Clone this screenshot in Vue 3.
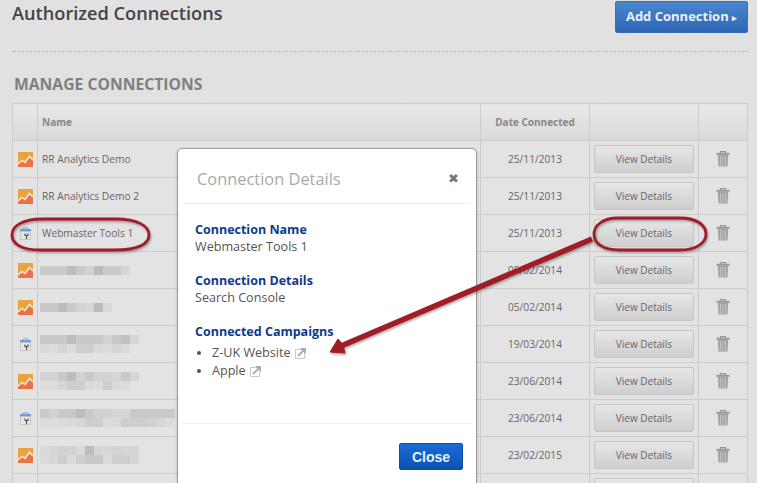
<script setup>
const shades = {
  a: '#c9c9c9', b: '#c5c5c6', c: '#cbc9c6', d: '#bdbdbe', e: '#d1d2d1', f: '#d6d6d7',
  g: '#bbbbba', h: '#d9dadb', i: '#dcdcdc', j: '#cdcfce', k: '#c1c1c0', l: '#d3d5d6'
}
const lines = (...s) => s.map(l => [...l].map(c => shades[c] || 'transparent'))

const data = [
  { type: 'ga', name: 'RR Analytics Demo', date: '25/11/2013', label: 'View Details' },
  { type: 'ga', name: 'RR Analytics Demo 2', date: '25/11/2013', label: 'View Details' },
  { type: 'wt', name: 'Webmaster Tools 1', date: '25/11/2013', label: 'View Details' },
  { type: 'ga', blur: lines('aacdcegaaf'), date: '05/02/2014', label: 'View Details' },
  { type: 'ga', blur: lines('aadaefgh'), date: '05/02/2014', label: 'View Details' },
  { type: 'wt', blur: lines('acadacaeakl', 'hifijjhifh'), date: '19/03/2014', label: 'View Details' },
  { type: 'ga', blur: lines('eeadeaeefaf', 'iifjjhijhi'), date: '23/06/2014', label: 'View Details' },
  { type: 'wt', blur: lines('aeacdaeeffaaaaa', 'iiihfjjihjjjefi'), date: '23/06/2014', label: 'View Details' },
  { type: 'ga', blur: lines('hfeehdffefl', 'ifjhjaaijjl'), date: '23/02/2015', label: 'View Details' },
  { type: 'none', blur: [], date: '', label: '' }
]
</script>

<template>
  <div class="page">
    <header class="top">
      <h1>Authorized Connections</h1>
      <button class="add">Add Connection <span class="caret">▸</span></button>
    </header>
    <h2>MANAGE CONNECTIONS</h2>
    <table>
      <colgroup>
        <col class="c1" /><col class="c2" /><col class="c3" /><col class="c4" /><col class="c5" />
      </colgroup>
      <thead>
        <tr>
          <th></th>
          <th class="left">Name</th>
          <th>Date Connected</th>
          <th></th>
          <th></th>
        </tr>
      </thead>
      <tbody>
        <tr v-for="(r, i) in data" :key="i">
          <td class="icon">
            <svg v-if="r.type === 'ga'" width="15" height="15" viewBox="0 0 15 15">
              <rect width="15" height="15" fill="#e9a440" />
              <path d="M0 12 L4 8.5 L7 10.5 L11.5 4.5 L15 8 V15 H0 Z" fill="#e8734b" />
              <path d="M0 12 L4 8.5 L7 10.5 L11.5 4.5 L15 8" fill="none" stroke="#f7e9da" stroke-width="1.5" />
            </svg>
            <svg v-else-if="r.type === 'wt'" width="13" height="13" viewBox="0 0 13 13">
              <path d="M4 2 V0.8 H9 V2" fill="none" stroke="#a3a8b0" stroke-width="1" />
              <rect x="1" y="2" width="11" height="2.4" fill="#6f9ce0" />
              <rect x="1.5" y="4.4" width="10" height="8.2" fill="#e6e6e7" stroke="#b4b4b4" stroke-width="0.6" />
              <path d="M6 6.5 V8.5 H9 V6.5 M7.5 8.5 V12" fill="none" stroke="#555" stroke-width="1.2" />
            </svg>
          </td>
          <td class="name">
            <template v-if="r.name">{{ r.name }}</template>
            <div v-else class="blur">
              <div v-for="(line, j) in r.blur" :key="j" class="blur-line">
                <span v-for="(c, k) in line" :key="k" :style="{ background: c }"></span>
              </div>
            </div>
          </td>
          <td class="date">{{ r.date }}</td>
          <td class="act"><button class="view">{{ r.label }}</button></td>
          <td class="icon">
            <svg v-if="r.type !== 'none'" width="14" height="16" viewBox="0 0 14 16">
              <path d="M4.5 2 V0.7 H9.5 V2" fill="none" stroke="#999" stroke-width="1.2" />
              <rect x="0.5" y="1.8" width="13" height="2" fill="#989898" />
              <path d="M1.8 4 H12.2 L11.5 15.5 H2.5 Z" fill="#a2a2a2" />
              <path d="M4.5 5 V15 M7 5 V15 M9.5 5 V15" stroke="#c4c4c4" stroke-width="1.1" />
            </svg>
          </td>
        </tr>
      </tbody>
    </table>

    <section class="modal">
      <div class="m-head">
        <span>Connection Details</span>
        <span class="x">✖</span>
      </div>
      <div class="m-body">
        <h3>Connection Name</h3>
        <p>Webmaster Tools 1</p>
        <h3>Connection Details</h3>
        <p>Search Console</p>
        <h3>Connected Campaigns</h3>
        <ul>
          <li>Z-UK Website
            <svg class="ext" width="11" height="11" viewBox="0 0 11 11"><path d="M5 1.5 H0.5 V10.5 H9.5 V6" fill="none" stroke="#c8c8c8" /><path d="M3 8 L9 2 M5.5 1 H10 V5.5" fill="none" stroke="#aaa" stroke-width="1.8" /></svg>
          </li>
          <li>Apple
            <svg class="ext" width="11" height="11" viewBox="0 0 11 11"><path d="M5 1.5 H0.5 V10.5 H9.5 V6" fill="none" stroke="#c8c8c8" /><path d="M3 8 L9 2 M5.5 1 H10 V5.5" fill="none" stroke="#aaa" stroke-width="1.8" /></svg>
          </li>
        </ul>
      </div>
      <div class="m-foot"><button class="close">Close</button></div>
    </section>

    <svg class="notes" width="757" height="483" viewBox="0 0 757 483">
      <defs>
        <filter id="sh" x="-10%" y="-20%" width="120%" height="140%">
          <feDropShadow dx="1" dy="1.5" stdDeviation="1.2" flood-color="#000" flood-opacity="0.35" />
        </filter>
      </defs>
      <g filter="url(#sh)">
        <path d="M592 239 L341 346" stroke="#a01b25" stroke-width="5.5" fill="none" />
        <path d="M330 352 L338 339 L343 345 L345 353 Z" fill="#a01b25" stroke="#a01b25" stroke-width="1" />
        <path d="M43 219 H115 C138 219 149 226 149 235 C149 244 138 250 115 250 H40 C22 250 12 244 12 235 C12 226 22 219 43 219 Z" fill="none" stroke="#a01b25" stroke-width="2.8" />
        <path d="M618 218 H680 C698 218 706 226 706 234 C706 243 696 250 680 250 H620 C602 250 594 243 594 234 C594 226 602 218 618 218 Z" fill="none" stroke="#a01b25" stroke-width="2.8" />
      </g>
    </svg>
  </div>
</template>

<style scoped>
.page {
  position: relative;
  width: 757px;
  height: 483px;
  overflow: hidden;
  background: #e4e4e4 url("data:image/svg+xml,%3Csvg xmlns='http://www.w3.org/2000/svg' width='200' height='200'%3E%3Cfilter id='n'%3E%3CfeTurbulence type='fractalNoise' baseFrequency='0.7' numOctaves='2'/%3E%3CfeColorMatrix values='0 0 0 0 0.5 0 0 0 0 0.5 0 0 0 0 0.5 0 0 0 0.14 0'/%3E%3C/filter%3E%3Crect width='200' height='200' filter='url(%23n)'/%3E%3C/svg%3E");
  padding: 0 9px 0 12px;
  box-sizing: border-box;
  font-family: "Open Sans", sans-serif;
}
.top {
  height: 51px;
  display: flex;
  justify-content: space-between;
  align-items: flex-start;
  border-bottom: 1px dotted #aaa;
}
h1 {
  margin: 0;
  font-size: 18.2px;
  line-height: 26px;
  font-weight: 600;
  color: #444;
}
.add {
  margin-top: 1px;
  width: 133px;
  height: 32px;
  padding: 0 0 2px;
  border: 1px solid #3a6db5;
  border-radius: 2px;
  background: linear-gradient(#4a86cf, #2f66b3);
  color: #e9f0f9;
  font: 700 13px "Open Sans", sans-serif;
}
.caret { font-size: 9px; }
h2 {
  margin: 22px 0 0 2px;
  height: 29px;
  font-size: 15.7px;
  line-height: 20px;
  font-weight: 700;
  color: #808080;
}
table {
  width: 736px;
  table-layout: fixed;
  border-collapse: collapse;
  font-size: 10.2px;
  color: #666;
}
.c1 { width: 25px; }
.c3, .c4 { width: 109px; }
.c5 { width: 49px; }
th, td {
  border: 1px solid #cdcdcd;
  height: 37px;
  box-sizing: border-box;
  padding: 0;
  text-align: center;
}
th {
  background: linear-gradient(#e8e8e8, #dadada);
  color: #888;
  font-weight: 700;
  font-size: 10px;
}
td { background: #e3e3e3; }
th.left, td.name { text-align: left; padding-left: 4px; }
.name, .date { white-space: nowrap; overflow: hidden; }
td svg { display: block; margin: 0 auto; }
.view {
  display: block;
  margin: 0 auto;
  width: 100px;
  height: 28px;
  padding: 0;
  border: 1px solid #c6c6c6;
  border-radius: 2px;
  background: linear-gradient(#e6e6e6, #cfcfcf);
  color: #666;
  font: 10px "Open Sans", sans-serif;
}
.blur { margin-left: -2px; }
.blur-line { display: flex; height: 9px; }
.blur-line span { width: 9px; flex: none; }

.modal {
  position: absolute;
  left: 177px;
  top: 148px;
  width: 300px;
  height: 340px;
  box-sizing: border-box;
  background: #fff;
  border: 1px solid #999;
  border-radius: 5px;
  box-shadow: 0 1px 3px rgba(0,0,0,.2);
  display: flex;
  flex-direction: column;
}
.m-head {
  margin: 0 4px;
  height: 55px;
  box-sizing: border-box;
  padding: 4px 13px 0 15px;
  border-bottom: 1px solid #eee;
  border-radius: 0 0 4px 4px;
  display: flex;
  justify-content: space-between;
  align-items: center;
  font-size: 16.4px;
  color: #aaa;
}
.x { font-size: 13px; color: #777; }
.m-body {
  height: 219px;
  box-sizing: border-box;
  padding: 17px 17px 0;
  font-size: 12.6px;
  color: #555;
}
h3 {
  margin: 0;
  font-size: 12.5px;
  line-height: 17px;
  font-weight: 700;
  color: #0d3a8c;
}
.m-body p {
  margin: 0 0 17px;
  line-height: 17px;
}
ul {
  margin: 4px 0 0;
  padding: 0 0 0 17px;
  line-height: 18px;
}
.ext { vertical-align: -2px; margin-left: 1px; }
.m-foot {
  margin: 0 4px;
  border-top: 1px solid #eee;
  display: flex;
  justify-content: flex-end;
  padding: 19px 9px 0 0;
}
.close {
  width: 64px;
  height: 27px;
  padding: 0;
  border: 1px solid #0b4fae;
  border-radius: 2px;
  background: linear-gradient(#1a6cd8, #0b52b0);
  color: #e8f1fb;
  font: 700 14px "Liberation Sans", sans-serif;
}
.notes {
  position: absolute;
  left: 0;
  top: 0;
  pointer-events: none;
}
</style>
